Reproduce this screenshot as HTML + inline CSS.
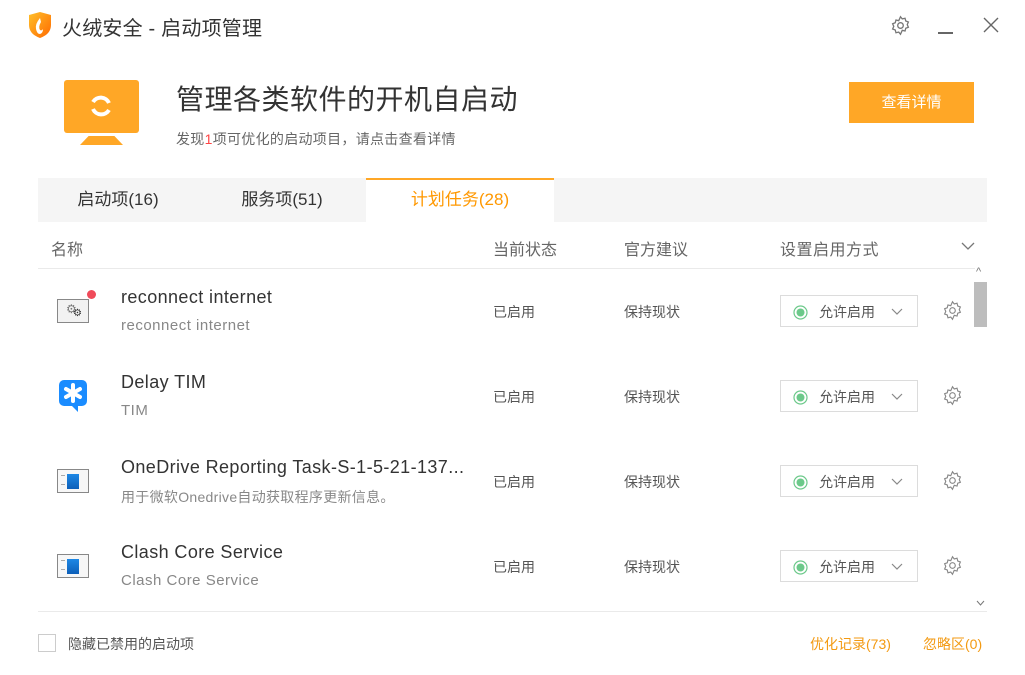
<!DOCTYPE html>
<html><head><meta charset="utf-8"><style>
*{margin:0;padding:0;box-sizing:border-box}
body{width:1025px;height:675px;background:#fff;font-family:"Liberation Sans","Noto Sans CJK SC",sans-serif;position:relative;overflow:hidden;color:#333}
.a{position:absolute;white-space:nowrap}
.tab{position:absolute;top:178px;height:44px;line-height:44px;font-size:17px;color:#333;text-align:center}
.hd{position:absolute;top:236px;font-size:16px;color:#666}
.t{font-size:18px;color:#333;letter-spacing:0.4px}
.s{font-size:15px;color:#888;letter-spacing:0.5px}
.c{font-size:14px;color:#555}
.dd{position:absolute;left:780px;width:138px;height:32px;border:1px solid #dcdcdc;background:#fff}
</style></head><body>
<svg class="a" style="left:27px;top:11px" width="26" height="28" viewBox="0 0 26 28"><defs><linearGradient id="g" x1="0" y1="0" x2="1" y2="1"><stop offset="0" stop-color="#ffc02a"/><stop offset="1" stop-color="#ff6a00"/></linearGradient></defs><path d="M2 4 L13 1 L24 4 L24 14 Q24 23 13 27 Q2 23 2 14Z" fill="url(#g)"/><path d="M13 7 Q8 13 9 18 Q10 23 13 23 Q16 22 16 18 Q15 20 13 19 Q11 16 14 11Z" fill="#fff"/></svg>
<div class="a" style="left:62px;top:12px;font-size:20px;color:#333;letter-spacing:0.2px">火绒安全 - 启动项管理</div>
<svg class="a" style="left:890px;top:15px" width="21" height="21" viewBox="0 0 24 24" fill="none" stroke="#777" stroke-width="1.5"><circle cx="12" cy="12" r="3.2"/><path d="M12 2l2 2.5 3.2-.8.8 3.2L21 8l-1.3 3 1.3 3-3 1.1-.8 3.2-3.2-.8L12 22l-2-2.5-3.2.8-.8-3.2L3 16l1.3-3L3 10l3-1.1.8-3.2 3.2.8Z"/></svg>
<div class="a" style="left:938px;top:32px;width:15px;height:1.5px;background:#666"></div>
<svg class="a" style="left:983px;top:17px" width="16" height="16" viewBox="0 0 16 16" stroke="#666" stroke-width="1.4"><path d="M1 1L15 15M15 1L1 15"/></svg>
<div class="a" style="left:64px;top:80px;width:75px;height:53px;background:#ffa726;border-radius:3px"></div>
<svg class="a" style="left:88px;top:93px" width="26" height="26" viewBox="0 0 26 26" fill="none" stroke="#fff" stroke-width="4"><path d="M5 9 A9 9 0 0 1 21 10"/><path d="M21 17 A9 9 0 0 1 5 16"/></svg>
<div class="a" style="left:80px;top:136px;width:43px;height:9px;background:#ffa726;clip-path:polygon(20% 0,80% 0,100% 100%,0 100%)"></div>
<div class="a" style="left:176px;top:78px;font-size:28px;color:#333;letter-spacing:0.5px">管理各类软件的开机自启动</div>
<div class="a" style="left:176px;top:129px;font-size:14px;color:#666;letter-spacing:0.3px">发现<span style="color:#f44">1</span>项可优化的启动项目，请点击查看详情</div>
<div class="a" style="left:849px;top:82px;width:125px;height:41px;background:#ffa726;color:#fff;font-size:15px;line-height:41px;text-align:center">查看详情</div>
<div class="a" style="left:38px;top:178px;width:949px;height:44px;background:#f5f5f5"></div>
<div class="a" style="left:366px;top:178px;width:188px;height:44px;background:#fff;border-top:2px solid #ffa726"></div>
<div class="tab" style="left:38px;width:160px">启动项(16)</div>
<div class="tab" style="left:202px;width:160px">服务项(51)</div>
<div class="tab" style="left:366px;width:188px;color:#ff9800">计划任务(28)</div>
<div class="hd" style="left:51px">名称</div>
<div class="hd" style="left:493px">当前状态</div>
<div class="hd" style="left:624px">官方建议</div>
<div class="hd" style="left:780px;letter-spacing:0.5px">设置启用方式</div>
<svg class="a" style="left:961px;top:241px" width="14" height="10" viewBox="0 0 14 10" fill="none" stroke="#777" stroke-width="1.3"><path d="M1 2l6 6 6-6"/></svg>
<div class="a" style="left:38px;top:268px;width:937px;height:1px;background:#eaeaea"></div>
<div class="a" style="left:38px;top:611px;width:949px;height:1px;background:#eaeaea"></div>
<div class="a" style="left:974px;top:282px;width:13px;height:45px;background:#bdbdbd"></div>
<div class="a" style="left:976px;top:266px;font-size:11px;color:#777">^</div>
<svg class="a" style="left:976px;top:600px" width="9" height="7" viewBox="0 0 9 7" fill="none" stroke="#777"><path d="M1 1l3.5 4 3.5-4"/></svg>

<div class="a" style="left:57px;top:299px;width:32px;height:24px;border:1px solid #888;background:#f2f2f2"></div>
<div class="a" style="left:66px;top:302px;font-size:12px;color:#777">⚙</div><div class="a" style="left:73px;top:308px;font-size:10px;color:#333">⚙</div>
<div class="a" style="left:87px;top:290px;width:9px;height:9px;border-radius:50%;background:#f04b5a"></div>
<svg class="a" style="left:59px;top:380px" width="28" height="32" viewBox="0 0 28 32"><path d="M5 0h18a5 5 0 0 1 5 5v16a5 5 0 0 1-5 5h-4v6l-6-6H5a5 5 0 0 1-5-5V5a5 5 0 0 1 5-5Z" fill="#1a8cff"/><path d="M14 5v16M7 9l14 8M21 9L7 17" stroke="#fff" stroke-width="4" stroke-linecap="round"/></svg>
<div class="a" style="left:57px;top:469px;width:32px;height:24px;border:1px solid #888;background:#f7f7f7"><div style="position:absolute;left:9px;top:4px;width:12px;height:15px;background:linear-gradient(#1e88e5,#0d5fb8)"></div><div style="position:absolute;left:3px;top:5px;width:4px;height:10px;border-top:1px solid #aaa;border-bottom:1px solid #aaa"></div></div>
<div class="a" style="left:57px;top:554px;width:32px;height:24px;border:1px solid #888;background:#f7f7f7"><div style="position:absolute;left:9px;top:4px;width:12px;height:15px;background:linear-gradient(#1e88e5,#0d5fb8)"></div><div style="position:absolute;left:3px;top:5px;width:4px;height:10px;border-top:1px solid #aaa;border-bottom:1px solid #aaa"></div></div>

<div class="a t" style="left:121px;top:287px">reconnect internet</div><div class="a s" style="left:121px;top:317px">reconnect internet</div>
<div class="a t" style="left:121px;top:372px">Delay TIM</div><div class="a s" style="left:121px;top:402px">TIM</div>
<div class="a t" style="left:121px;top:457px">OneDrive Reporting Task-S-1-5-21-137...</div><div class="a s" style="left:121px;top:487px;font-size:14px;letter-spacing:0.3px">用于微软Onedrive自动获取程序更新信息。</div>
<div class="a t" style="left:121px;top:542px">Clash Core Service</div><div class="a s" style="left:121px;top:572px">Clash Core Service</div>

<div class="a c" style="left:493px;top:302px">已启用</div><div class="a c" style="left:624px;top:302px">保持现状</div>
<div class="a c" style="left:493px;top:387px">已启用</div><div class="a c" style="left:624px;top:387px">保持现状</div>
<div class="a c" style="left:493px;top:472px">已启用</div><div class="a c" style="left:624px;top:472px">保持现状</div>
<div class="a c" style="left:493px;top:557px">已启用</div><div class="a c" style="left:624px;top:557px">保持现状</div>

<div id="dds"></div>
<script>
var ys=[295,380,465,550],h='';
ys.forEach(function(y){
h+='<div class="dd" style="top:'+y+'px"><svg style="position:absolute;left:12px;top:9px" width="15" height="15" viewBox="0 0 15 15"><circle cx="7.5" cy="7.5" r="6.5" fill="none" stroke="#6cc98a" stroke-width="1.2"/><circle cx="7.5" cy="7.5" r="4" fill="#6cc98a"/></svg><span style="position:absolute;left:38px;top:6px;font-size:14px;color:#555">允许启用</span><svg style="position:absolute;left:110px;top:12px" width="12" height="8" viewBox="0 0 12 8" fill="none" stroke="#888" stroke-width="1.2"><path d="M1 1l5 5 5-5"/></svg></div>';
h+='<svg class="a" style="left:942px;top:'+(y+5)+'px" width="21" height="21" viewBox="0 0 24 24" fill="none" stroke="#888" stroke-width="1.3"><circle cx="12" cy="12" r="3.2"/><path d="M12 2l2 2.5 3.2-.8.8 3.2L21 8l-1.3 3 1.3 3-3 1.1-.8 3.2-3.2-.8L12 22l-2-2.5-3.2.8-.8-3.2L3 16l1.3-3L3 10l3-1.1.8-3.2 3.2.8Z"/></svg>';
});
document.getElementById('dds').innerHTML=h;
</script>
<div class="a" style="left:38px;top:634px;width:18px;height:18px;border:1px solid #ccc"></div>
<div class="a" style="left:68px;top:634px;font-size:14px;color:#555">隐藏已禁用的启动项</div>
<div class="a" style="left:810px;top:634px;font-size:14px;color:#f39a12">优化记录(73)</div>
<div class="a" style="left:923px;top:634px;font-size:14px;color:#f39a12">忽略区(0)</div>
</body></html>
